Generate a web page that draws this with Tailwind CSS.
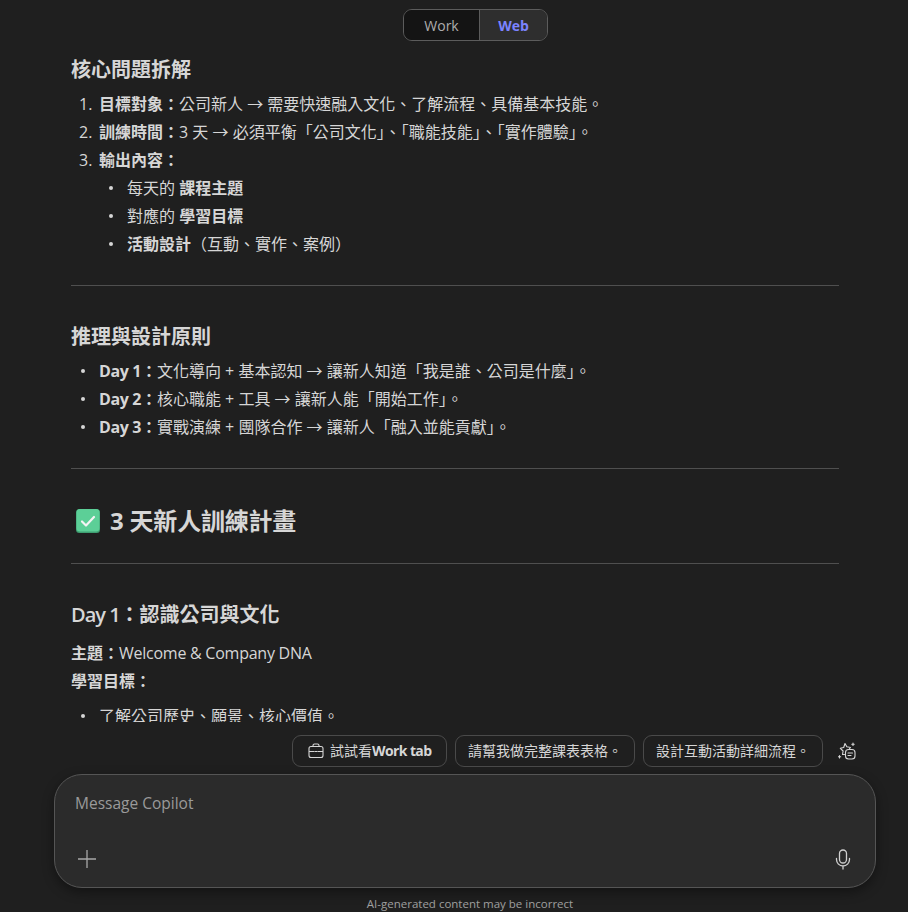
<!DOCTYPE html>
<html lang="zh-Hant">
<head>
    <meta charset="UTF-8">
    <title>Message Copilot</title>
    <script src="https://cdn.jsdelivr.net/npm/@tailwindcss/browser@4"></script>
</head>
<body class="bg-[#1f1f1f] text-[#d6d6d6] font-['Open_Sans','Noto_Sans_CJK_TC',sans-serif] h-[912px] w-[908px] overflow-hidden flex flex-col">
    <!-- Work / Web toggle -->
    <div class="h-[50px] pt-[9px] pl-[43px] flex justify-center shrink-0">
        <div class="flex h-[32px] w-[145px] border border-[#5c5c5c] rounded-[9px] overflow-hidden text-[14px]">
            <div class="w-[76px] bg-[#141414] text-[#adadad] flex items-center justify-center border-r border-[#5c5c5c]">Work</div>
            <div class="flex-1 bg-[#2e2e2e] text-[#7c83ff] font-bold flex items-center justify-center">Web</div>
        </div>
    </div>

    <!-- Conversation -->
    <div class="h-[672px] shrink-0 overflow-hidden pl-[71px] pr-[69px] text-[16px] leading-[28px]">
        <h3 class="text-[20px] font-bold leading-[28px] mt-[6px]">核心問題拆解</h3>
        <ol class="mt-[6px]">
            <li class="flex"><span class="w-[28px] pl-[8px]">1.</span><div><b>目標對象：</b>公司新人 → 需要快速融入文化、了解流程、具備基本技能。</div></li>
            <li class="flex"><span class="w-[28px] pl-[8px]">2.</span><div><b>訓練時間：</b>3 天 → 必須平衡「公司文化」、「職能技能」、「實作體驗」。</div></li>
            <li class="flex"><span class="w-[28px] pl-[8px]">3.</span><div><b>輸出內容：</b></div></li>
        </ol>
        <ul class="pl-[28px]">
            <li class="flex items-center"><span class="w-[28px] pl-[10px]"><i class="block w-[4px] h-[4px] rounded-full bg-[#d6d6d6]"></i></span><div>每天的 <b>課程主題</b></div></li>
            <li class="flex items-center"><span class="w-[28px] pl-[10px]"><i class="block w-[4px] h-[4px] rounded-full bg-[#d6d6d6]"></i></span><div>對應的 <b>學習目標</b></div></li>
            <li class="flex items-center"><span class="w-[28px] pl-[10px]"><i class="block w-[4px] h-[4px] rounded-full bg-[#d6d6d6]"></i></span><div><b>活動設計</b>（互動、實作、案例）</div></li>
        </ul>
        <hr class="border-[#4f4f4f] mt-[27px]">
        <h3 class="text-[20px] font-bold leading-[28px] mt-[37px]">推理與設計原則</h3>
        <ul class="mt-[6px]">
            <li class="flex items-center"><span class="w-[28px] pl-[10px]"><i class="block w-[4px] h-[4px] rounded-full bg-[#d6d6d6]"></i></span><div><b class="tracking-[-0.4px]">Day 1</b><b>：</b>文化導向 + 基本認知 → 讓新人知道「我是誰、公司是什麼」。</div></li>
            <li class="flex items-center"><span class="w-[28px] pl-[10px]"><i class="block w-[4px] h-[4px] rounded-full bg-[#d6d6d6]"></i></span><div><b class="tracking-[-0.4px]">Day 2</b><b>：</b>核心職能 + 工具 → 讓新人能「開始工作」。</div></li>
            <li class="flex items-center"><span class="w-[28px] pl-[10px]"><i class="block w-[4px] h-[4px] rounded-full bg-[#d6d6d6]"></i></span><div><b class="tracking-[-0.4px]">Day 3</b><b>：</b>實戰演練 + 團隊合作 → 讓新人「融入並能貢獻」。</div></li>
        </ul>
        <hr class="border-[#4f4f4f] mt-[27px]">
        <h2 class="text-[24px] font-bold leading-[32px] mt-[36px] flex items-center">
            <svg class="w-[24px] h-[24px] ml-[5px] mr-[10px]" viewBox="0 0 24 24">
                <rect x="0" y="0" width="24" height="24" rx="3.5" fill="#3f9f72"/>
                <rect x="0.5" y="0" width="23" height="22.5" rx="3.5" fill="#5ccf97"/>
                <path d="M6 12.5l4 4 8-8.5" fill="none" stroke="#f4f4f4" stroke-width="2.2" stroke-linecap="round" stroke-linejoin="round"/>
            </svg>
            <span class="tracking-[-0.2px]">3 天新人訓練計畫</span>
        </h2>
        <hr class="border-[#4f4f4f] mt-[26px]">
        <h3 class="text-[20px] font-bold leading-[28px] mt-[37px]"><span class="font-semibold tracking-[-1px]">Day 1</span>：認識公司與文化</h3>
        <p class="mt-[10px]"><b>主題：</b><span class="tracking-[-0.25px]">Welcome &amp; Company DNA</span></p>
        <p><b>學習目標：</b></p>
        <ul class="mt-[7px]">
            <li class="flex items-center"><span class="w-[28px] pl-[10px]"><i class="block w-[4px] h-[4px] rounded-full bg-[#d6d6d6]"></i></span><div>了解公司歷史、願景、核心價值。</div></li>
        </ul>
    </div>

    <!-- Suggestions -->
    <div class="h-[52px] shrink-0 flex justify-end items-start pt-[13px] pr-[52px] gap-[8px] text-[14px] text-[#d6d6d6]">
        <button class="h-[32px] w-[155px] pl-[15px] pb-[2px] border border-[#4a4a4a] rounded-[9px] flex items-center gap-[6px]">
            <svg class="w-[16px] h-[16px] mt-[2px]" viewBox="0 0 16 16" fill="none" stroke="#d6d6d6" stroke-width="1.1">
                <rect x="1" y="3.500" width="14" height="11" rx="2"/>
                <path d="M5 3.500V2.500A1.500 1.500 0 0 1 6.500 1h3A1.500 1.500 0 0 1 11 2.500v1M1 8.500h5.500M9.500 8.500H15M6.800 8.500h2.400"/>
            </svg>
            <span class="whitespace-nowrap">試試看<b class="tracking-[-0.6px]">Work tab</b></span>
        </button>
        <button class="h-[32px] w-[180px] pb-[2px] border border-[#4a4a4a] rounded-[9px] whitespace-nowrap">請幫我做完整課表表格。</button>
        <button class="h-[32px] w-[180px] pb-[2px] border border-[#4a4a4a] rounded-[9px] whitespace-nowrap">設計互動活動詳細流程。</button>
        <svg class="w-[18px] h-[18px] ml-[7px] mt-[7px]" viewBox="0 0 18 18" fill="none" stroke="#d6d6d6" stroke-width="1.1" stroke-linejoin="round" stroke-linecap="round">
            <path d="M7 1.500l1.800 3.300 3.700.7-1 1.100M6.500 12.500H4.500l.6-3.500-2.800-2.700 3.400-.8L7 1.500"/>
            <rect x="7.500" y="7.500" width="9.500" height="9.500" rx="3"/>
            <path d="M10 11h4.500M10 13.500h3M15 1v2.500M13.800 2.200h2.400M1.500 13.500v2.500M.3 14.800h2.400"/>
        </svg>
    </div>

    <!-- Composer -->
    <div class="pl-[54px] pr-[32px] shrink-0">
        <div class="relative h-[114px] bg-[#2b2b2b] border border-[#555] rounded-[28px] shadow-[0_4px_12px_rgba(0,0,0,0.4)]">
            <div class="absolute left-[20px] top-[18px] text-[15.5px] leading-[21px] text-[#9a9a9a]">Message Copilot</div>
            <svg class="absolute left-[22px] bottom-[18px] w-[20px] h-[20px]" viewBox="0 0 20 20" stroke="#a8a8a8" stroke-width="1.3" fill="none">
                <path d="M10 1v18M1 10h18"/>
            </svg>
            <svg class="absolute right-[22px] bottom-[17px] w-[20px] h-[21px]" viewBox="0 0 20 21" stroke="#d0d0d0" stroke-width="1.3" fill="none" stroke-linecap="round">
                <rect x="6.500" y="1" width="7" height="13" rx="3.500"/>
                <path d="M3.500 9.500v1a6.500 6.500 0 0 0 13 0v-1M10 17v3"/>
            </svg>
        </div>
    </div>

    <div class="pl-[32px] text-center text-[11.5px] leading-[15px] text-[#a0a0a0] mt-[8px]">AI-generated content may be incorrect</div>
</body>
</html>
